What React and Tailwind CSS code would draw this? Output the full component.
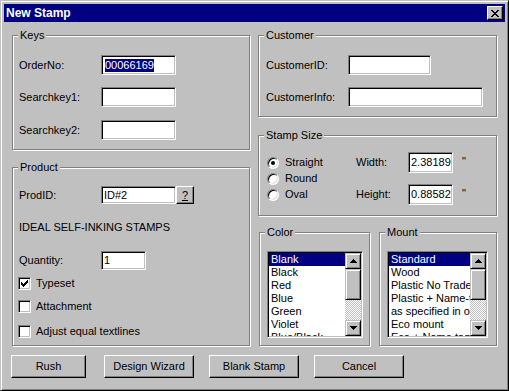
import clsx from "clsx";

const sunken =
  "border border-t-[#808080] border-l-[#808080] border-r-white border-b-white shadow-[inset_1px_1px_0_#000,inset_-1px_-1px_0_#c0c0c0]";
const raised =
  "border border-t-white border-l-white border-r-black border-b-black shadow-[inset_-1px_-1px_0_#808080] bg-[#c0c0c0]";
const raisedSoft =
  "border border-t-[#c0c0c0] border-l-[#c0c0c0] border-r-black border-b-black shadow-[inset_1px_1px_0_#fff,inset_-1px_-1px_0_#808080] bg-[#c0c0c0]";

const X_ROWS = ["11000011", "01100110", "00111100", "00011000", "00111100", "01100110", "11000011"];
const CHECK_ROWS = ["0000001", "0000011", "1000111", "1101110", "1111100", "0111000", "0010000"];
const UP_ROWS = ["0001000", "0011100", "0111110", "1111111"];
const DOWN_ROWS = [...UP_ROWS].reverse();

function Pixels({ rows }) {
  const w = rows[0].length;
  const h = rows.length;
  return (
    <svg width={w} height={h} viewBox={`0 0 ${w} ${h}`} shapeRendering="crispEdges">
      {rows.map((r, y) =>
        r.split("").map((c, x) =>
          c === "1" ? <rect key={`${x}-${y}`} x={x} y={y} width="1" height="1" fill="#000" /> : null
        )
      )}
    </svg>
  );
}

function Group({ title, className, children }) {
  return (
    <div
      className={clsx(
        "relative border border-[#808080] shadow-[inset_1px_1px_0_#fff,1px_1px_0_#fff]",
        className
      )}
    >
      <span className="absolute -top-[7px] left-[5px] px-[2px] bg-[#c0c0c0] leading-[13px]">
        {title}
      </span>
      {children}
    </div>
  );
}

function TextBox({ className, children }) {
  return (
    <div
      className={clsx(
        sunken,
        "bg-white flex items-center pl-[2px] overflow-hidden whitespace-nowrap",
        className
      )}
    >
      {children}
    </div>
  );
}

function Row({ label, labelW = "w-[82px]", box, value, className }) {
  return (
    <div className={clsx("flex items-center", className)}>
      <span className={labelW}>{label}</span>
      <TextBox className={box}>{value}</TextBox>
    </div>
  );
}

function Check({ checked, label, className }) {
  return (
    <div className={clsx("flex items-center h-[13px]", className)}>
      <div className={clsx(sunken, "w-[13px] h-[13px] bg-white flex items-center justify-center")}>
        {checked && <Pixels rows={CHECK_ROWS} />}
      </div>
      <span className="ml-[5px]">{label}</span>
    </div>
  );
}

function Radio({ checked, label }) {
  return (
    <div className="flex items-center w-[89px]">
      <div className="w-[12px] h-[12px] rounded-full border border-t-[#808080] border-l-[#808080] border-r-white border-b-white bg-white shadow-[inset_1px_1px_0_#000,inset_-1px_-1px_0_#dfdfdf] flex items-center justify-center">
        {checked && <div className="w-[4px] h-[4px] rounded-full bg-black" />}
      </div>
      <span className="ml-[6px]">{label}</span>
    </div>
  );
}

function ListBox({ items, className }) {
  return (
    <div className={clsx(sunken, "bg-white flex p-[1px] overflow-hidden", className)}>
      <div className="flex-1 min-w-0 overflow-hidden">
        {items.map((it, i) => (
          <div
            key={it}
            className={clsx(
              "h-[13px] leading-[13px] pl-[2px] whitespace-nowrap",
              i === 0 && "bg-[#000080] text-white"
            )}
          >
            {it}
          </div>
        ))}
      </div>
      <div className="w-[16px] flex flex-col">
        <div className={clsx(raisedSoft, "h-[16px] flex items-center justify-center")}>
          <Pixels rows={UP_ROWS} />
        </div>
        <div className={clsx(raisedSoft, "h-[31px]")} />
        <div className="flex-1 bg-[conic-gradient(#fff_25%,#c0c0c0_0_50%,#fff_0_75%,#c0c0c0_0)] bg-[length:2px_2px]" />
        <div className={clsx(raisedSoft, "h-[16px] flex items-center justify-center")}>
          <Pixels rows={DOWN_ROWS} />
        </div>
      </div>
    </div>
  );
}

function Button({ className, children }) {
  return (
    <button className={clsx(raised, "h-[23px] flex items-center justify-center", className)}>
      {children}
    </button>
  );
}

const colors = ["Blank", "Black", "Red", "Blue", "Green", "Violet", "Blue/Black"];
const mounts = [
  "Standard",
  "Wood",
  "Plastic No Trade-mark",
  "Plastic + Name-tag",
  "as specified in order",
  "Eco mount",
  "Eco + Name tag",
];

export default function App() {
  return (
    <div className="w-[509px] h-[391px] bg-[#c0c0c0] border border-t-[#c0c0c0] border-l-[#c0c0c0] border-r-black border-b-black shadow-[inset_1px_1px_0_#fff,inset_-1px_-1px_0_#808080] p-[3px] font-['Liberation_Sans',Arial,sans-serif] text-[11px] leading-[13px] text-black select-none">
      <div className="h-[18px] bg-[#000080] flex items-center justify-between pl-[2px] pr-[2px]">
        <span className="text-white font-bold text-[12px]">New Stamp</span>
        <div className={clsx(raised, "w-[16px] h-[14px] flex items-center justify-center")}>
          <Pixels rows={X_ROWS} />
        </div>
      </div>

      <div className="flex pl-[8px] mt-[13px]">
        <div className="w-[238px] flex flex-col">
          <Group title="Keys" className="h-[115px] pl-[6px] pt-[19px]">
            <Row
              label="OrderNo:"
              box="w-[75px] h-[20px] !pl-[3px]"
              value={<span className="bg-[#000080] text-white leading-[13px]">00066169</span>}
            />
            <Row label="Searchkey1:" box="w-[75px] h-[20px]" className="mt-[12px]" />
            <Row label="Searchkey2:" box="w-[75px] h-[20px]" className="mt-[13px]" />
          </Group>

          <Group title="Product" className="h-[179px] mt-[17px] pl-[6px] pt-[18px]">
            <div className="flex items-center">
              <span className="w-[82px]">ProdID:</span>
              <TextBox className="w-[75px] h-[18px]">ID#2</TextBox>
              <Button className="w-[18px] !h-[18px]">
                <span className="underline">?</span>
              </Button>
            </div>
            <div className="mt-[17px] h-[13px]">IDEAL SELF-INKING STAMPS</div>
            <Row label="Quantity:" box="w-[45px] h-[19px]" value="1" className="mt-[17px]" />
            <Check checked label="Typeset" className="mt-[7px] -ml-[1px]" />
            <Check label="Attachment" className="mt-[10px] -ml-[1px]" />
            <Check label="Adjust equal textlines" className="mt-[12px] -ml-[1px]" />
          </Group>
        </div>

        <div className="w-[239px] ml-[8px] flex flex-col">
          <Group title="Customer" className="h-[82px] pl-[7px] pt-[19px]">
            <Row label="CustomerID:" box="w-[83px] h-[20px]" />
            <Row label="CustomerInfo:" box="w-[135px] h-[20px]" className="mt-[12px]" />
          </Group>

          <Group title="Stamp Size" className="h-[81px] mt-[18px] pl-[8px] pt-[16px]">
            <div className="flex items-center h-[21px]">
              <Radio checked label="Straight" />
              <span className="w-[52px]">Width:</span>
              <TextBox className="w-[45px] h-[21px]">2.38189</TextBox>
              <span className="ml-[9px] self-start mt-[3px]">"</span>
            </div>
            <div className="flex items-center h-[11px]">
              <Radio label="Round" />
            </div>
            <div className="flex items-center h-[21px]">
              <Radio label="Oval" />
              <span className="w-[52px]">Height:</span>
              <TextBox className="w-[45px] h-[21px]">0.88582</TextBox>
              <span className="ml-[9px] self-start mt-[3px]">"</span>
            </div>
          </Group>

          <div className="flex mt-[16px]">
            <Group title="Color" className="w-[111px] h-[114px] ml-[1px] pl-[7px] pt-[18px]">
              <ListBox items={colors} className="w-[96px] h-[87px]" />
            </Group>
            <Group title="Mount" className="w-[118px] h-[114px] ml-[9px] pl-[7px] pt-[18px]">
              <ListBox items={mounts} className="w-[101px] h-[87px]" />
            </Group>
          </div>
        </div>
      </div>

      <div className="flex mt-[9px] pl-[7px]">
        <Button className="w-[75px]">Rush</Button>
        <Button className="w-[90px] ml-[18px]">Design Wizard</Button>
        <Button className="w-[90px] ml-[15px]">Blank Stamp</Button>
        <Button className="w-[90px] ml-[15px]">Cancel</Button>
      </div>
    </div>
  );
}
